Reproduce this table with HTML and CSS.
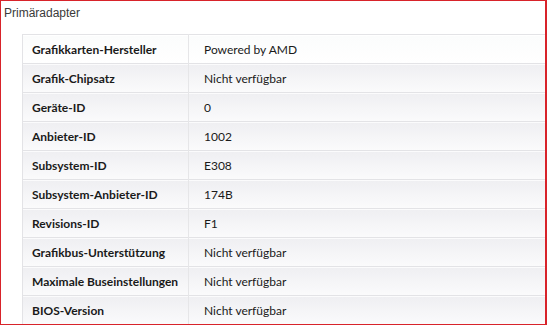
FILE: index.html
```html
<!DOCTYPE html>
<html lang="de">
<head>
<meta charset="utf-8">
<title>Primäradapter</title>
<link rel="stylesheet" href="styles.css">
</head>
<body>
<section class="panel">
  <h2 class="panel-title">Primäradapter</h2>
  <table class="props">
    <tbody>
      <tr><th>Grafikkarten-Hersteller</th><td>Powered by AMD</td></tr>
      <tr><th>Grafik-Chipsatz</th><td>Nicht verfügbar</td></tr>
      <tr><th>Geräte-ID</th><td>0</td></tr>
      <tr><th>Anbieter-ID</th><td>1002</td></tr>
      <tr><th>Subsystem-ID</th><td>E308</td></tr>
      <tr><th>Subsystem-Anbieter-ID</th><td>174B</td></tr>
      <tr><th>Revisions-ID</th><td>F1</td></tr>
      <tr><th>Grafikbus-Unterstützung</th><td>Nicht verfügbar</td></tr>
      <tr><th>Maximale Buseinstellungen</th><td>Nicht verfügbar</td></tr>
      <tr><th>BIOS-Version</th><td>Nicht verfügbar</td></tr>
    </tbody>
  </table>
</section>
</body>
</html>
```
FILE: styles.css
```css
html, body {
  margin: 0;
  padding: 0;
  background: #ffffff;
}

.panel {
  box-sizing: border-box;
  width: 547px;
  height: 325px;
  border: 1px solid #d8232a;
  border-right-width: 2px;
  overflow: hidden;
}

.panel-title {
  margin: 0;
  height: 33px;
  padding: 4px 0 0 3px;
  box-sizing: border-box;
  font: normal 12px/16px "Liberation Sans", Arial, sans-serif;
  color: #3a3a3a;
}

.props {
  margin-left: 21px;
  width: calc(100% - 21px);
  border-collapse: collapse;
  font-family: Lato, "Open Sans", sans-serif;
  font-size: 12px;
  color: #1a1a1a;
}

.props tr {
  height: 29px;
  border-top: 1px solid #e3e3e6;
  background: linear-gradient(#efeff2, #fbfbfc);
}

.props tr:first-child {
  background: linear-gradient(#fbfcfc, #ffffff);
}

.props th,
.props td {
  box-sizing: border-box;
  height: 28px;
  padding: 0;
  vertical-align: middle;
  white-space: nowrap;
}

.props th {
  width: 166px;
  padding-left: 9px;
  text-align: left;
  font-weight: bold;
  border-left: 1px solid #e3e3e6;
  border-right: 1px solid #e6e6e8;
}

.props td {
  padding-left: 15px;
  font-weight: normal;
}
```
